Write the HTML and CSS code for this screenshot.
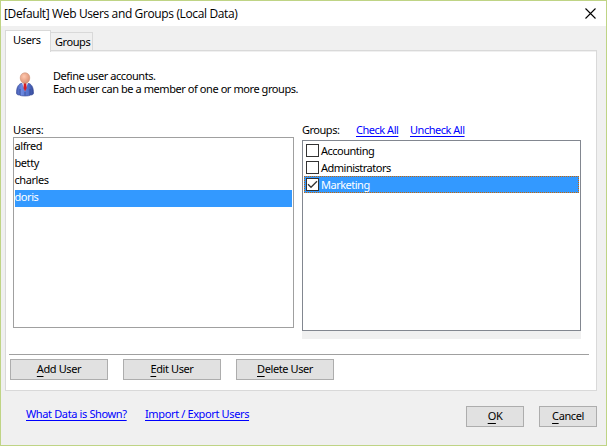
FILE: index.html
```html
<!DOCTYPE html>
<html lang="en">
<head>
<meta charset="utf-8">
<title>Web Users and Groups</title>
<link rel="stylesheet" href="styles.css">
</head>
<body>
<div class="window">
  <header class="titlebar">
    <span class="title">[Default] Web Users and Groups (Local Data)</span>
    <svg class="close" width="11" height="11" viewBox="0 0 11 11"><path d="M.5 .5l10 10M10.5 .5l-10 10" stroke="#000" stroke-width="1.1" fill="none"/></svg>
  </header>
  <nav class="tabs">
    <div class="tab active"><span>Users</span></div>
    <div class="tab"><span>Groups</span></div>
  </nav>
  <main class="panel">
    <section class="intro">
      <svg class="person" width="18" height="25" viewBox="0 0 18 25">
        <defs>
          <radialGradient id="skin" cx=".4" cy=".35" r=".7"><stop offset="0" stop-color="#ffc8ae"/><stop offset="1" stop-color="#d98d70"/></radialGradient>
          <linearGradient id="suit" x1="0" x2="1"><stop offset="0" stop-color="#465db3"/><stop offset=".3" stop-color="#6d8ae2"/><stop offset=".7" stop-color="#526fc9"/><stop offset="1" stop-color="#364a98"/></linearGradient>
        </defs>
        <path d="M.5 21c0-5 1.500-8.500 4.500-9.500h8c3 1 4.500 4.500 4.500 9.500 0 1.500-1.200 2-3 2-1 1.300-10 1.300-11 0-1.800 0-3-.5-3-2z" fill="url(#suit)" stroke="#41539d" stroke-width=".7"/>
        <path d="M6 11l3 8 3-8z" fill="#e5e9f8"/>
        <path d="M7.800 11h2.400l.5 5L9 19.500l-1.500-3.500z" fill="#d51c24"/>
        <path d="M4 17v6M14 17v6M9 20v3.500" stroke="#34478f" stroke-width=".8"/>
        <path d="M9 .8c2.900 0 4.800 2.100 4.800 5.100S12 11.300 9 11.300 4.200 8.900 4.200 5.900 6.100 .8 9 .8z" fill="url(#skin)" stroke="#c79076" stroke-width=".5"/>
      </svg>
      <div class="copy"><div class="line1">Define user accounts.</div><div class="line2">Each user can be a member of one or more groups.</div></div>
    </section>
    <section class="lists">
      <div class="users">
        <div class="label">Users:</div>
        <ul class="listbox">
          <li>alfred</li>
          <li>betty</li>
          <li>charles</li>
          <li class="selected">doris</li>
        </ul>
      </div>
      <div class="groups">
        <div class="label"><span class="caption">Groups:</span><a class="link check">Check All</a><a class="link uncheck">Uncheck All</a></div>
        <ul class="checklist">
          <li><i class="box"></i><span>Accounting</span></li>
          <li><i class="box"></i><span>Administrators</span></li>
          <li class="selected"><i class="box"><svg width="11" height="11" viewBox="0 0 11 11"><path d="M1 5.300l3 3L10 2.300" fill="none" stroke="#333" stroke-width="1.300"/></svg></i><span>Marketing</span></li>
        </ul>
        <div class="strip"></div>
      </div>
    </section>
    <div class="actions">
      <button class="button"><span><u>A</u>dd User</span></button>
      <button class="button"><span><u>E</u>dit User</span></button>
      <button class="button"><span><u>D</u>elete User</span></button>
    </div>
  </main>
  <footer class="footer">
    <a class="link data">What Data is Shown?</a>
    <a class="link import">Import / Export Users</a>
    <button class="button ok"><span><u>O</u>K</span></button>
    <button class="button cancel"><span><u>C</u>ancel</span></button>
  </footer>
</div>
</body>
</html>
```
FILE: styles.css
```css
* { box-sizing: border-box; }
body { margin: 0; font: 11px/13px "Noto Sans", "Open Sans", sans-serif; letter-spacing: -0.43px; color: #000; }
.window { width: 607px; height: 446px; border: 1px solid #bfd485; background: #f0f0f0; display: flex; flex-direction: column; }
.titlebar { height: 25px; flex: none; background: #fff; display: flex; align-items: center; justify-content: space-between; padding: 0 10px 0 3px; }
.title { font: 12px/16px "Open Sans", sans-serif; letter-spacing: -0.37px; }
.close { display: block; margin-top: 0; }
.tabs { height: 24px; flex: none; display: flex; align-items: flex-end; padding-left: 4px; }
.tab { width: 42px; height: 18px; border: 1px solid #d9d9d9; border-left: 0; border-bottom: 0; padding: 2px 0 0 4px; white-space: nowrap; }
.tab.active { width: 46px; height: 22px; border-left: 1px solid #d9d9d9; background: #fff; margin-bottom: -2px; padding: 2px 0 0 7px; letter-spacing: -0.3px; position: relative; z-index: 1; }
.panel { width: 592px; height: 341px; flex: none; margin-left: 4px; border: 1px solid #d9d9d9; background: #fff; box-shadow: inset 0 1px #f0f0f0; display: flex; flex-direction: column; }
.intro { height: 72px; flex: none; display: flex; padding: 21px 0 0 10px; }
.person { display: block; flex: none; }
.copy { margin: -3px 0 0 19px; white-space: nowrap; }
.lists { display: flex; gap: 8px; height: 231px; flex: none; padding-left: 7px; }
.users { width: 281px; }
.groups { width: 279px; }
.label { height: 14px; white-space: nowrap; letter-spacing: -0.3px; }
.groups .label { height: 17px; display: flex; letter-spacing: -0.48px; }
.caption { width: 54px; }
.link { color: #0000ff; text-decoration: underline; text-underline-offset: 2px; text-decoration-thickness: 1px; text-decoration-skip-ink: none; white-space: nowrap; }
.check { width: 54px; }
ul { list-style: none; margin: 0; padding: 1px; background: #fff; height: 191px; }
li { height: 17px; }
.listbox { border: 1px solid #a0a0a0; }
.listbox li { line-height: 13px; text-indent: -0.5px; }
.selected { background: #3399ff; color: #fff; }
.checklist { border: 1px solid #828790; letter-spacing: -0.5px; }
.checklist li { display: flex; align-items: center; padding-left: 2px; }
.checklist .selected {
  background:
    repeating-linear-gradient(90deg, #cc6600 0 1px, #3399ff 1px 2px) top / 100% 1px no-repeat,
    repeating-linear-gradient(90deg, #cc6600 0 1px, #3399ff 1px 2px) bottom / 100% 1px no-repeat,
    repeating-linear-gradient(#cc6600 0 1px, #3399ff 1px 2px) left / 1px 100% no-repeat,
    repeating-linear-gradient(#cc6600 0 1px, #3399ff 1px 2px) right / 1px 100% no-repeat,
    #3399ff;
}
.box { width: 13px; height: 13px; margin-right: 2px; border: 1px solid #333; background: #fff; }
.box svg { display: block; }
.strip { height: 8px; background: #f0f0f0; }
.actions { width: 580px; margin: 0 0 0 3px; border-top: 1px solid #a0a0a0; padding: 4px 0 0 1px; display: flex; gap: 15px; }
.button { width: 98px; height: 21px; flex: none; padding: 0 0 2px; border: 1px solid #adadad; background: #e1e1e1; font: inherit; letter-spacing: -0.4px; color: #000; text-align: center; }
.button u { text-underline-offset: 3px; text-decoration-thickness: 1px; text-decoration-skip-ink: none; }
.footer { display: flex; padding: 15px 0 0 25px; }
.footer .link { margin-top: 1px; width: 119px; letter-spacing: -0.37px; }
.ok, .cancel { width: 58px; }
.ok { margin-left: auto; }
.cancel { margin: 0 9px 0 15px; }
```
